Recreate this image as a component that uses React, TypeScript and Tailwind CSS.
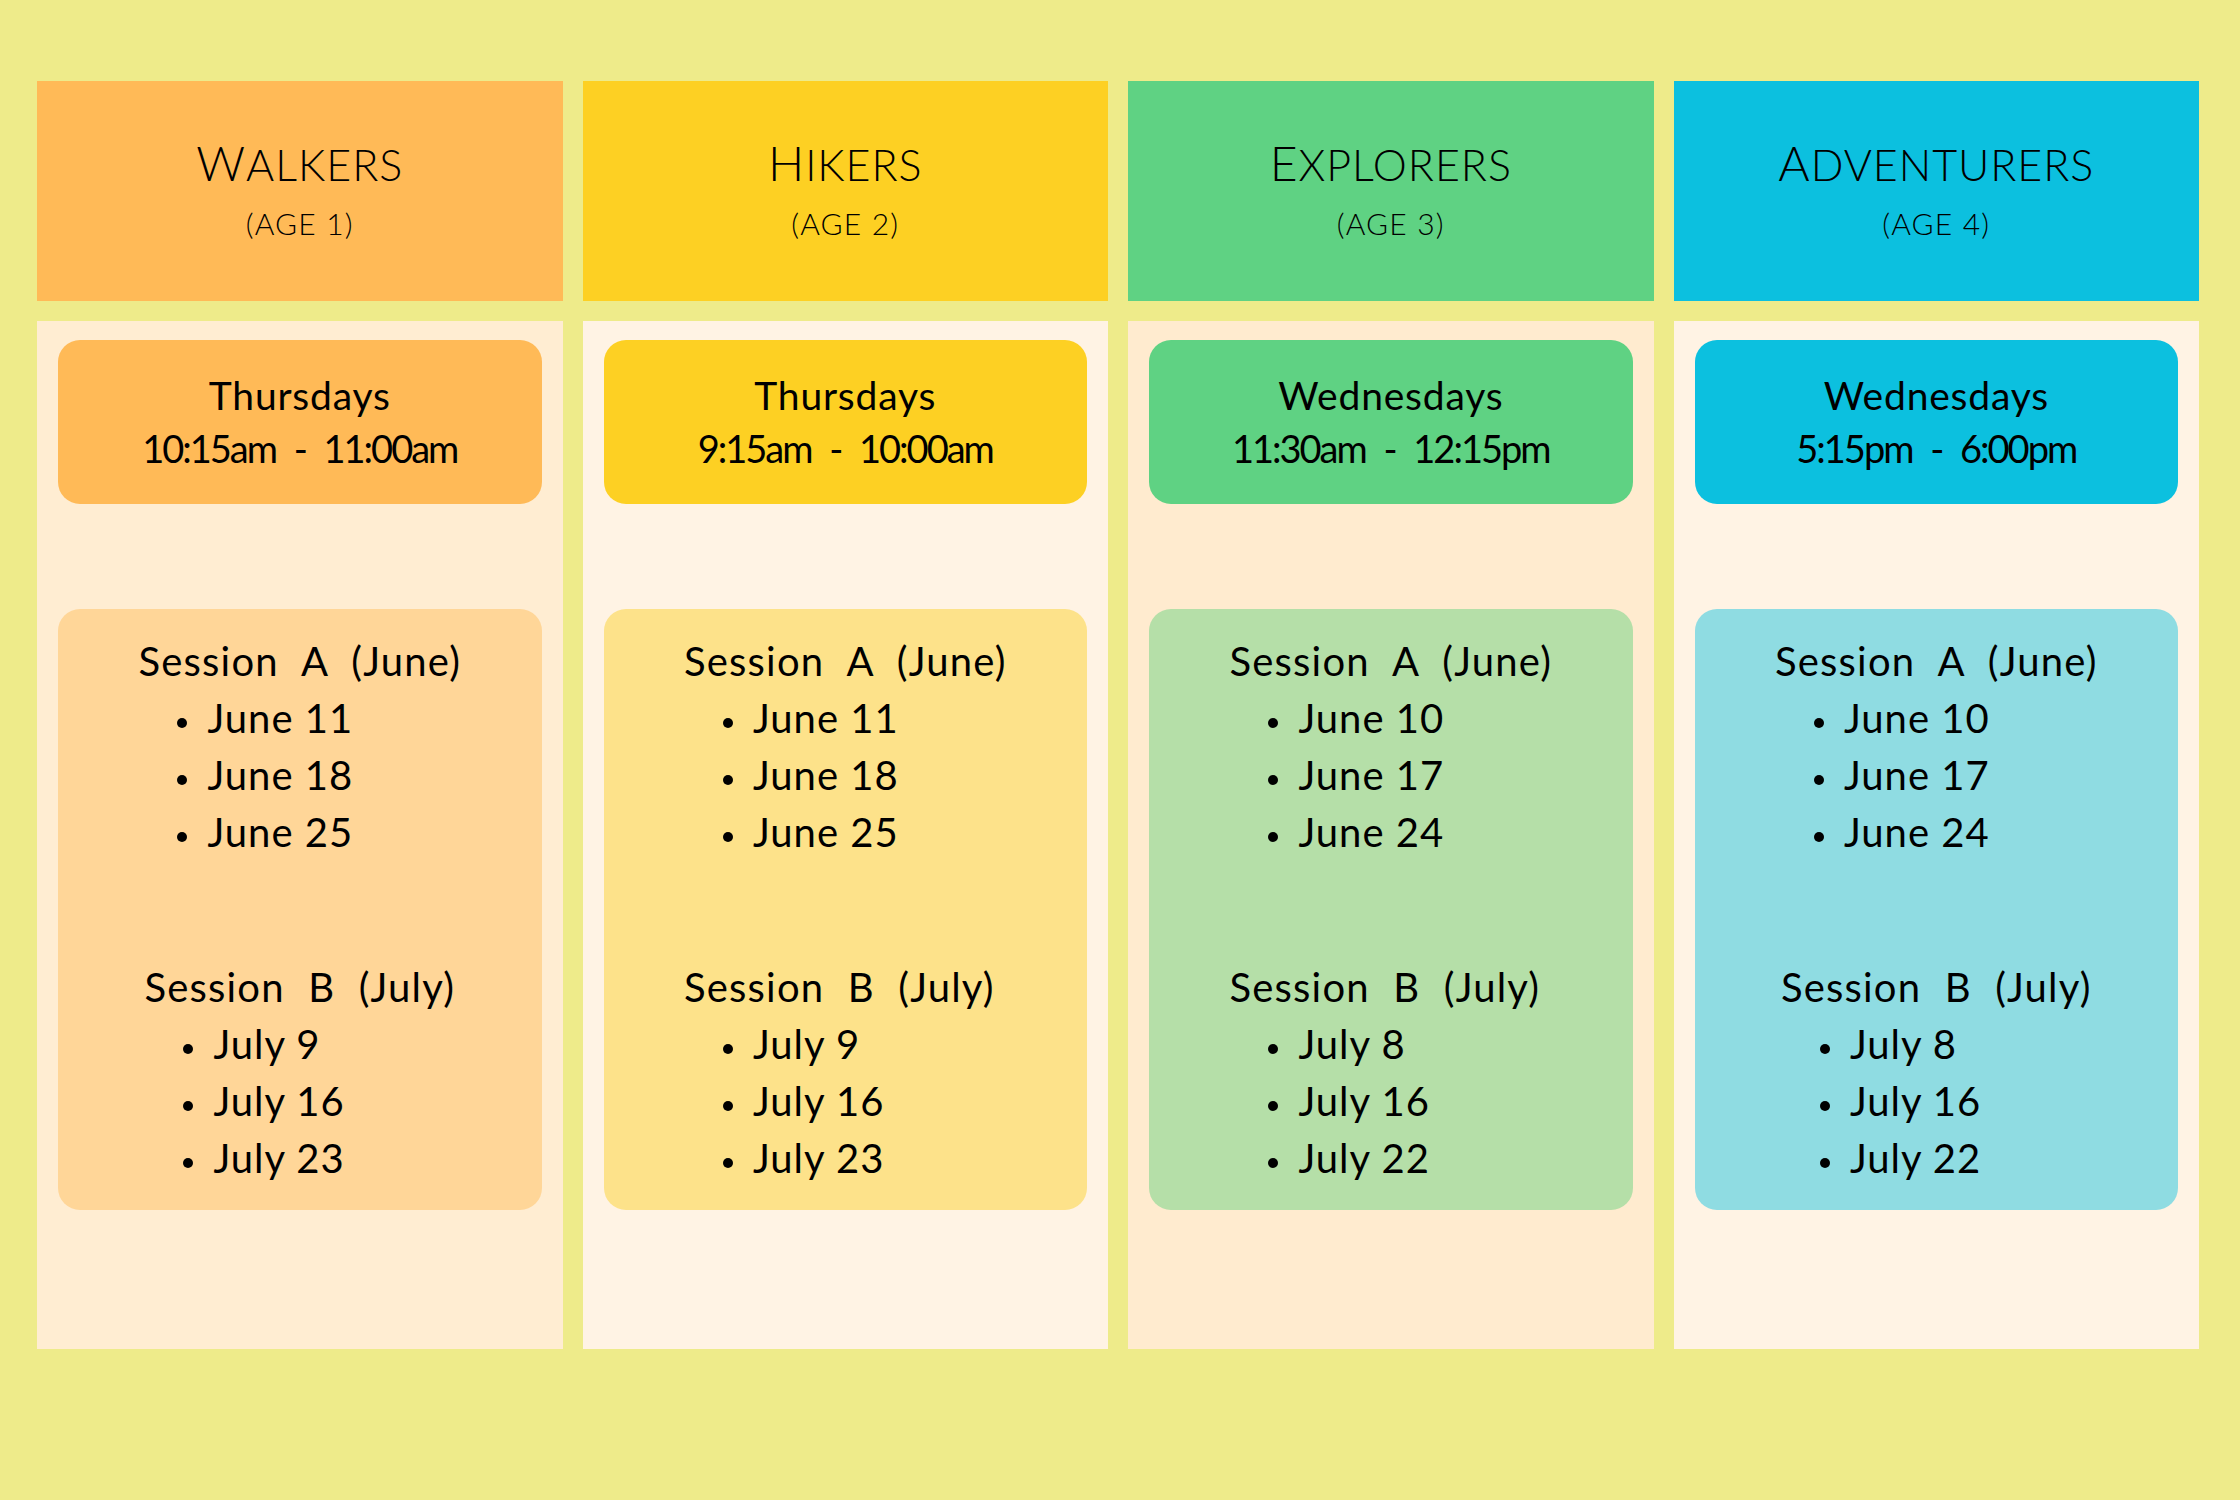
import React from "react";

type Col = {
  title: string;
  age: string;
  day: string;
  time: string;
  a: string[];
  b: string[];
  left: boolean;
  head: string;
  body: string;
  box: string;
};

const cols: Col[] = [
  {
    title: "Walkers",
    age: "(AGE 1)",
    day: "Thursdays",
    time: "10:15am - 11:00am",
    a: ["June 11", "June 18", "June 25"],
    b: ["July 9", "July 16", "July 23"],
    left: false,
    head: "bg-[#ffba57]",
    body: "bg-[#ffedd2]",
    box: "bg-[#ffd698]",
  },
  {
    title: "Hikers",
    age: "(AGE 2)",
    day: "Thursdays",
    time: "9:15am - 10:00am",
    a: ["June 11", "June 18", "June 25"],
    b: ["July 9", "July 16", "July 23"],
    left: true,
    head: "bg-[#fdd023]",
    body: "bg-[#fff3e4]",
    box: "bg-[#fde28a]",
  },
  {
    title: "Explorers",
    age: "(AGE 3)",
    day: "Wednesdays",
    time: "11:30am - 12:15pm",
    a: ["June 10", "June 17", "June 24"],
    b: ["July 8", "July 16", "July 22"],
    left: true,
    head: "bg-[#5fd283]",
    body: "bg-[#ffebcf]",
    box: "bg-[#b5dfa8]",
  },
  {
    title: "Adventurers",
    age: "(AGE 4)",
    day: "Wednesdays",
    time: "5:15pm - 6:00pm",
    a: ["June 10", "June 17", "June 24"],
    b: ["July 8", "July 16", "July 22"],
    left: false,
    head: "bg-[#0cc0df]",
    body: "bg-[#fff3e4]",
    box: "bg-[#8fdce2]",
  },
];

function Section({ heading, items, center }: { heading: string; items: string[]; center: boolean }) {
  return (
    <div className={center ? "w-fit mx-auto" : ""}>
      <div className="leading-[57px] whitespace-nowrap tracking-[1.2px] [word-spacing:12px]">{heading}</div>
      <ul>
        {items.map((it) => (
          <li key={it} className="leading-[57px] pl-[39px] whitespace-nowrap tracking-[1px]">
            <span className="inline-block align-middle w-[10px] h-[10px] rounded-full bg-black mr-[20px]"></span>
            {it}
          </li>
        ))}
      </ul>
    </div>
  );
}

function Column({ c }: { c: Col }) {
  return (
    <div className="flex flex-col gap-[20px]">
      <div className={`${c.head} h-[220px] flex flex-col items-center pt-[54px] text-black font-light`}>
        <div className="leading-[56px] tracking-[0.06em] whitespace-nowrap">
          <span className="text-[48px]">{c.title[0]}</span>
          <span className="text-[43px]">{c.title.slice(1).toUpperCase()}</span>
        </div>
        <div className="leading-[40px] text-[30px] tracking-[0.04em]">{c.age}</div>
      </div>
      <div className={`${c.body} h-[1028px] pt-[19px] px-[21px]`}>
        <div className={`${c.head} h-[164px] rounded-[22px] flex flex-col items-center justify-center text-[39px] leading-[53px] text-black`}>
          <div className="tracking-[0.8px]">{c.day}</div>
          <div className="text-[38px] tracking-[-2px] [word-spacing:10px]">{c.time}</div>
        </div>
        <div className={`${c.box} mt-[105px] rounded-[22px] pt-[24px] pb-[23px] text-[40px] text-black`}>
          {c.left ? (
            <div className="w-fit mx-auto flex flex-col gap-[98px]">
              <Section heading="Session A (June)" items={c.a} center={false} />
              <Section heading="Session B (July)" items={c.b} center={false} />
            </div>
          ) : (
            <div className="flex flex-col gap-[98px]">
              <Section heading="Session A (June)" items={c.a} center={true} />
              <Section heading="Session B (July)" items={c.b} center={true} />
            </div>
          )}
        </div>
      </div>
    </div>
  );
}

export default function App() {
  return (
    <div
      className="w-[2240px] h-[1500px] bg-[#eeeb8a] pt-[81px] pl-[37px] pr-[41px] grid grid-cols-4 gap-x-[20px] items-start"
      style={{ fontFamily: "Lato, 'Open Sans', sans-serif" }}
    >
      {cols.map((c) => (
        <Column key={c.title} c={c} />
      ))}
    </div>
  );
}
